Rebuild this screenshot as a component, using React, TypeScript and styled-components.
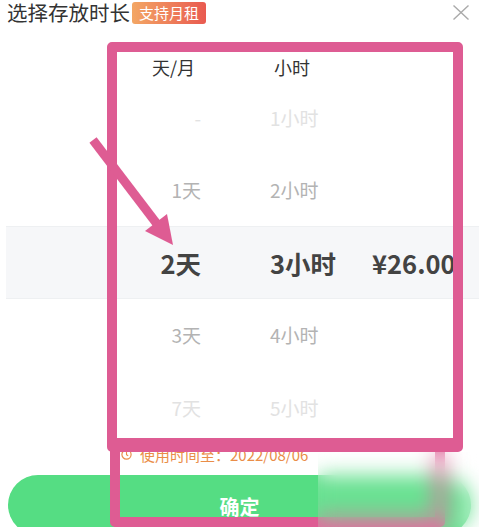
import styled, { createGlobalStyle } from "styled-components";

const GlobalStyle = createGlobalStyle`
  html, body {
    margin: 0;
    padding: 0;
    background: #fff;
  }
  body {
    font-family: "Noto Sans CJK SC", "Noto Sans", sans-serif;
  }
`;

const Page = styled.div`
  position: relative;
  width: 479px;
  height: 527px;
  overflow: hidden;
  background: #fff;
`;

const TopBar = styled.header`
  height: 25px;
  display: flex;
  align-items: center;
  padding: 0 9px 0 7px;
`;

const Title = styled.h1`
  margin: 0;
  font-size: 20.5px;
  font-weight: 400;
  line-height: 25px;
  color: #333;
`;

const Badge = styled.span`
  margin-left: 2px;
  height: 22px;
  padding: 0 7px;
  display: inline-flex;
  align-items: center;
  font-size: 15px;
  color: #fff;
  background: linear-gradient(90deg, #f3a664, #e95a50);
  border-radius: 3px;
`;

const CloseBtn = styled.button`
  margin-left: auto;
  padding: 0;
  border: none;
  background: none;
  display: flex;
  svg {
    display: block;
  }
`;

const GRID = "195px 69px 102px 1fr";

const ColumnHead = styled.div`
  margin: 20px 0 0 6px;
  height: 36px;
  display: grid;
  grid-template-columns: ${GRID};
  align-items: end;
  padding-bottom: 5px;
  box-sizing: border-box;
  font-size: 18px;
  line-height: 18px;
  color: #333;
`;

const DayLabel = styled.span`
  grid-column: 1;
  text-align: right;
  padding-right: 6px;
`;

const HourLabel = styled.span`
  grid-column: 3;
  padding-left: 4px;
`;

const Picker = styled.div``;

type Tone = "faint" | "mid" | "active";

const toneColor: Record<Tone, string> = {
  faint: "#e2e2e2",
  mid: "#b3b3b3",
  active: "#434343",
};

const Row = styled.div<{ $tone: Tone }>`
  margin-left: 6px;
  height: 72.5px;
  box-sizing: border-box;
  display: grid;
  grid-template-columns: ${GRID};
  align-items: center;
  white-space: nowrap;
  color: ${(p) => toneColor[p.$tone]};
  font-size: ${(p) => (p.$tone === "active" ? "25.5px" : "19px")};
  font-weight: ${(p) => (p.$tone === "active" ? 700 : 400)};
  background: ${(p) => (p.$tone === "active" ? "#f6f7f9" : "transparent")};
  border-top: 1px solid ${(p) => (p.$tone === "active" ? "#eef0f2" : "transparent")};
  border-bottom: 1px solid ${(p) => (p.$tone === "active" ? "#eef0f2" : "transparent")};
`;

const DayCell = styled.span`
  grid-column: 1;
  text-align: right;
`;

const HourCell = styled.span`
  grid-column: 3;
`;

const PriceCell = styled.span`
  grid-column: 4;
`;

const Tip = styled.div`
  height: 22px;
  display: flex;
  align-items: center;
  gap: 8px;
  padding-left: 121px;
  font-size: 15px;
  color: #ea8d48;
  white-space: nowrap;
`;

const ConfirmButton = styled.button`
  margin: 9px 8px 0;
  width: calc(100% - 16px);
  height: 60px;
  border: none;
  border-radius: 30px;
  background: #55dd83;
  color: #fff;
  font-family: inherit;
  font-size: 20px;
  font-weight: 700;
  display: flex;
  justify-content: center;
  align-items: center;
  padding: 4px 0 0;
`;

/* annotation layer drawn over the screenshot */
const HighlightBox = styled.div<{ $x: number; $y: number; $w: number; $h: number; $bottom?: number }>`
  position: absolute;
  left: ${(p) => p.$x}px;
  top: ${(p) => p.$y}px;
  width: ${(p) => p.$w}px;
  height: ${(p) => p.$h}px;
  box-sizing: border-box;
  border: 10.5px solid #de5c93;
  border-bottom-width: ${(p) => p.$bottom ?? 10.5}px;
  border-radius: 5px;
  pointer-events: none;
`;

const Arrow = styled.svg`
  position: absolute;
  left: 80px;
  top: 120px;
  pointer-events: none;
`;

const BlurPatch = styled.div`
  position: absolute;
  left: 318px;
  top: 452px;
  right: 0;
  bottom: 0;
  backdrop-filter: blur(10px);
  -webkit-backdrop-filter: blur(10px);
  background: rgba(255, 255, 255, 0.12);
`;

const rows: { day: string; hour: string; price?: string; tone: Tone }[] = [
  { day: "-", hour: "1小时", tone: "faint" },
  { day: "1天", hour: "2小时", tone: "mid" },
  { day: "2天", hour: "3小时", price: "¥26.00", tone: "active" },
  { day: "3天", hour: "4小时", tone: "mid" },
  { day: "7天", hour: "5小时", tone: "faint" },
];

function App() {
  return (
    <Page>
      <GlobalStyle />
      <TopBar>
        <Title>选择存放时长</Title>
        <Badge>支持月租</Badge>
        <CloseBtn aria-label="关闭">
          <svg width="18" height="15" viewBox="0 0 18 15">
            <path d="M1.5 0.5 L16.5 14.5 M16.5 0.5 L1.5 14.5" stroke="#aaa" strokeWidth="1.4" fill="none" />
          </svg>
        </CloseBtn>
      </TopBar>

      <ColumnHead>
        <DayLabel>天/月</DayLabel>
        <HourLabel>小时</HourLabel>
      </ColumnHead>

      <Picker>
        {rows.map((r) => (
          <Row key={r.day + r.hour} $tone={r.tone}>
            <DayCell>{r.day}</DayCell>
            <HourCell>{r.hour}</HourCell>
            {r.price && <PriceCell>{r.price}</PriceCell>}
          </Row>
        ))}
      </Picker>

      <Tip>
        <svg width="11" height="11" viewBox="0 0 11 11">
          <circle cx="5.5" cy="5.5" r="4.6" stroke="#ea8d48" strokeWidth="1.2" fill="none" />
          <path d="M5.5 3 V5.8 L7.2 6.8" stroke="#ea8d48" strokeWidth="1.1" fill="none" />
        </svg>
        使用时间至：2022/08/06
      </Tip>

      <ConfirmButton>确定</ConfirmButton>

      <HighlightBox $x={110} $y={440} $w={335} $h={87} />
      <HighlightBox $x={107} $y={42} $w={356} $h={410} $bottom={14} />
      <Arrow width="110" height="140" viewBox="0 0 110 140">
        <line x1="13" y1="20" x2="77" y2="104" stroke="#de5c93" strokeWidth="9" />
        <polygon points="93,125 87,94 65,111" fill="#de5c93" />
      </Arrow>
      <BlurPatch />
    </Page>
  );
}

export default App;
